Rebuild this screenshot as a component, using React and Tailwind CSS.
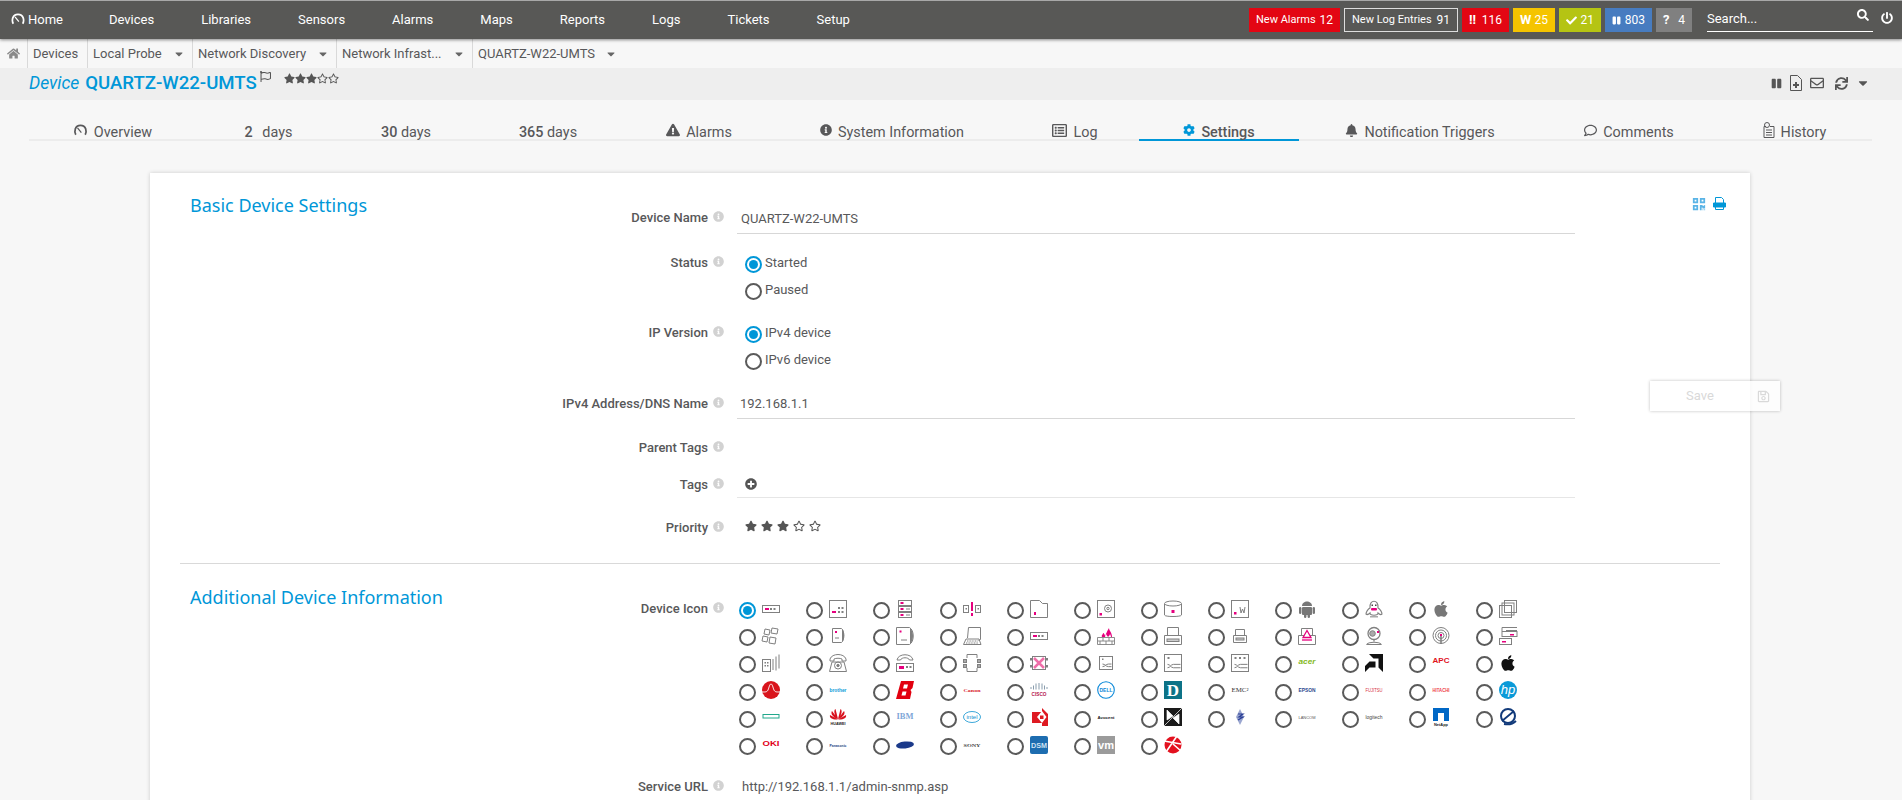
import React from 'react';
import {
  FaHome, FaSearch, FaPowerOff, FaExclamationTriangle, FaInfoCircle, FaCog, FaBell, FaRegComment,
  FaStar, FaRegStar, FaPlusCircle, FaPause, FaRegEnvelope, FaSync, FaCaretDown, FaQrcode,
  FaRegSave, FaCheck, FaRegListAlt, FaRegFlag,
} from 'react-icons/fa';

const NAV = ['Devices', 'Libraries', 'Sensors', 'Alarms', 'Maps', 'Reports', 'Logs', 'Tickets', 'Setup'];
const G = '#808080';
const P = '#e6007e';

const Gauge = ({ className }) => (
  <svg viewBox="0 0 16 14" className={className} fill="none" stroke="currentColor">
    <path d="M2.5 12.5C0.5 9 1.2 1.5 8 1.5s7.5 7.5 5.5 11" strokeWidth="2" />
    <path d="M4.5 4.5L9 10" strokeWidth="1.4" />
  </svg>
);

// Small svg wrapper for the device icon sprite, every cell is 18x18
const I = ({ children }) => (
  <svg viewBox="0 0 18 18" width="18" height="18" fill="none" stroke={G} strokeWidth="1" className="mb-[4px] shrink-0 overflow-visible">
    {children}
  </svg>
);
const Pk = ({ x, y, w = 2, h = 2 }) => <rect x={x} y={y} width={w} height={h} fill={P} stroke="none" />;
const Dot = ({ x, y, w = 1.5, h = 1.5, c = G }) => <rect x={x} y={y} width={w} height={h} fill={c} stroke="none" />;
const Lbl = ({ t, c, s = 5, w = 400, f = 'Liberation Sans', y = 10.5, l = 17, it }) => (
  <text x="9" y={y} textAnchor="middle" textLength={l} lengthAdjust="spacingAndGlyphs" fontSize={s} fontWeight={w} fontStyle={it ? 'italic' : 'normal'} fontFamily={f} fill={c} stroke="none">{t}</text>
);
const Logo = props => <I><Lbl {...props} /></I>;
const XBox = ({ children, x = 0.5, y = 0.5, s = 17 }) => (
  <I>
    <rect x={x} y={y} width={s} height={s} />
    <path d={`M${x + 3} ${y + s * 0.58}c3 0 3 ${s * 0.2} 6 ${s * 0.2}h${s - 10}M${x + 3} ${y + s * 0.78}c3 0 3 -${s * 0.2} 6 -${s * 0.2}h${s - 10}`} />
    {children}
  </I>
);
const Apple = ({ c }) => (
  <svg viewBox="0 0 384 512" width="18" height="18" className="mb-[4px] shrink-0" fill={c}>
    <path d="M318.7 268.7c-.2-36.7 16.4-64.4 50-84.8-18.8-26.9-47.2-41.7-84.7-44.6-35.5-2.8-74.3 20.7-88.5 20.7-15 0-49.4-19.7-76.4-19.7C63.3 141.2 4 184.8 4 273.5q0 39.3 14.4 81.2c12.8 36.7 59 126.7 107.2 125.2 25.2-.6 43-17.9 75.8-17.9 31.8 0 48.3 17.9 76.4 17.9 48.6-.7 90.4-82.5 102.6-119.3-65.2-30.7-61.7-90-61.7-91.9zm-56.6-164.2c27.3-32.4 24.8-61.9 24-72.5-24.1 1.4-52 16.4-67.9 34.9-17.5 19.8-27.8 44.3-25.6 71.9 26.1 2 49.9-11.4 69.5-34.3z" />
  </svg>
);

const ICONS = [
  <I><rect x=".5" y="5.5" width="17" height="7" /><Pk x="3" y="8" w="4" /><Dot x="8" y="8" w="2" h="2" /><Dot x="11.5" y="8" w="2" h="2" /></I>,
  <I><rect x=".5" y=".5" width="17" height="17" /><Pk x="3" y="11" w="4" /><Dot x="9" y="7" w="2" h="2" /><Dot x="12.5" y="7" w="2" h="2" /><Dot x="9" y="11" w="2" h="2" /><Dot x="12.5" y="11" w="2" h="2" /></I>,
  <I><rect x="2.5" y=".5" width="13" height="5" /><rect x="2.5" y="6.5" width="13" height="5" /><rect x="2.5" y="12.5" width="13" height="5" /><Pk x="4.5" y="2" w="3" /><Pk x="4.5" y="8" w="3" /><Pk x="4.5" y="14" w="3" /><path d="M10 9h4M10 15h4" /></I>,
  <I><rect x=".5" y="5.5" width="5" height="7" /><rect x="12.5" y="5.5" width="5" height="7" /><Pk x="8" y="2" h="9" /><Pk x="8" y="13" h="3" /><Dot x="2.5" y="8" /><Dot x="14.5" y="8" /></I>,
  <I><path d="M.5 .5h9l3 3h5v14h-17z" /><Pk x="4" y="12" h="3" /></I>,
  <I><rect x=".5" y=".5" width="17" height="17" /><Pk x="2.5" y="13" w="2.5" h="2.5" /><circle cx="11" cy="8.5" r="3.5" /><circle cx="11" cy="8.5" r="1.2" /></I>,
  <I><path d="M.5 4v11c0 2 17 2 17 0V4" /><ellipse cx="9" cy="3.5" rx="8.5" ry="2.5" /><Pk x="7.5" y="10" w="3" h="3" /></I>,
  <I><rect x=".5" y=".5" width="17" height="17" /><Pk x="3" y="12" w="2.5" h="2.5" /><path d="M9 7l1 6 1.5-4 1.5 4 1-6" /></I>,
  <I><g fill="#777" stroke="none"><path d="M4 6c0-6 10-6 10 0z" /><rect x="4" y="7" width="10" height="8" rx="1" /><rect x="1" y="7" width="2.4" height="7" rx="1.2" /><rect x="14.6" y="7" width="2.4" height="7" rx="1.2" /><rect x="6" y="14" width="2.4" height="4" rx="1.2" /><rect x="9.6" y="14" width="2.4" height="4" rx="1.2" /></g></I>,
  <I><path d="M5 8C4-1 14-1 13 8c2 1 4 4 4 6-1 1-3 0-4-1 0 3-8 3-8 0-1 1-3 2-4 1 0-2 2-5 4-6z" strokeWidth="1.1" /><rect x="6" y="8" width="6" height="2.5" rx="1" fill={P} stroke="none" /><Dot x="6.5" y="4.5" c="#444" /><Dot x="10" y="4.5" c="#444" /><rect x="5" y="16" width="8" height="1.5" fill="#aaa" stroke="none" /></I>,
  <Apple c="#777" />,
  <I><rect x=".5" y="5.5" width="12" height="12" /><rect x="3" y="3" width="12" height="12" /><rect x="5.5" y=".5" width="12" height="12" /></I>,

  <I><path d="M3 2l5 1-1 5-5-1zM10 1l6 1-1 5-6-1zM1 9l5 1-1 5-5-1zM8 10l6 1-1 6-6-1z" /></I>,
  <I><path d="M3.5 1.5h9c3 2 3 12 0 14h-9z" /><path d="M13 2c3 2 3 11 0 13" fill={G} stroke="none" /><Pk x="6" y="4" /><path d="M6 11h4" /></I>,
  <I><path d="M.5 .5h13c5 3 5 14 0 17H.5z" /><path d="M14 1c4 3 4 13 0 16z" fill={G} stroke="none" /><Pk x="3.5" y="3.5" /><path d="M5 13h6" /></I>,
  <I><path d="M5.5 .5h12v12l-2 1" /><path d="M4.5 11l1-10.5" /><path d="M3 12h13l2 5.5H.5z" /><path d="M4 14h11M3 16h12" strokeDasharray="1 .6" /></I>,
  <I><rect x=".5" y="5.5" width="17" height="7" /><Pk x="3" y="8" w="4" /><Dot x="8" y="8" w="2" h="2" /><Dot x="11.5" y="8" w="2" h="2" /></I>,
  <I><path d="M.5 10.5h17v7H.5zM.5 14h17M6 10.5V14M12 10.5V14M3 14v3.5M9 14v3.5M15 14v3.5" strokeWidth=".9" /><path d="M5 10c-1-2 1-2 1-4 1 0 2 2 2 3 1-2 2-5 4-8 0 3 3 4 3 9h-1c0-1-1-3-1-3 0 1-1 2-2 3-1-1-2-3-2-3l-1 3z" fill={P} stroke="none" /></I>,
  <I><path d="M3.5 8V.5h11V8" /><path d="M.5 8.5h17v9H.5z" /><rect x="3" y="12" width="12" height="2.5" fill="#ccc" /></I>,
  <I><path d="M4.5 8V2.5h9V8" /><path d="M2.5 8.5h13v7h-13z" /><rect x="5" y="11" width="8" height="2" fill="#ccc" /></I>,
  <I><path d="M3.5 8V1.5h11V8" /><path d="M.5 8.5h17v9H.5z" /><path d="M9 3.5l4 7H5z" fill="#fff" stroke={P} strokeWidth="1.3" /><path d="M4 13h10" stroke={P} strokeWidth="1.3" /></I>,
  <I><circle cx="9" cy="6.5" r="6" strokeWidth="1.3" /><circle cx="7.5" cy="6.5" r="2.8" fill="#aaa" /><Pk x="12" y="4" /><path d="M9 12.5v2M2 17.5c1-3 13-3 14 0z" strokeWidth="1.2" /></I>,
  <I><circle cx="9" cy="8.5" r="8" /><circle cx="9" cy="8.5" r="5.5" /><circle cx="9" cy="8.5" r="3" /><path d="M9 8v9" strokeWidth="1.6" /><Pk x="8" y="7" /></I>,
  <I><path d="M3 4V.5h15M7 3.5h11" /><rect x="3" y="4.5" width="15" height="5" /><rect x=".5" y="11.5" width="12" height="6" fill="#fff" /><Pk x="3" y="14" w="4" h="1.5" /><Pk x="11" y="7" w="4" h="1.5" /></I>,

  <I><rect x=".5" y="5.5" width="8" height="12" /><Dot x="2.5" y="8" /><Dot x="5" y="8" /><Dot x="2.5" y="11" /><Dot x="5" y="11" /><path d="M11 5v11M14 2.5v14M17 .5v14" /></I>,
  <I><path d="M1 5c2-6 14-6 16 0v2h-4V5c-2-1-6-1-8 0v2H1zM3 8h12l2.500 9.500H.5z" /><circle cx="9" cy="11.5" r="3.5" /><circle cx="9" cy="11.5" r="1.2" fill={G} /></I>,
  <I><path d="M1 6c1-7 15-7 16 0H13.5c-1-3-8-3-9 0z" /><rect x=".5" y="9.5" width="17" height="8" /><Pk x="3" y="12" w="5" h="3" /><Dot x="10" y="12" w="2" h="2" /><Dot x="13.5" y="12" w="2" h="2" /></I>,
  <I><path d="M4 .5h10M14 .5V4M4 .5V4M14 17.5H4V14M14 17.5V14" /><rect x=".5" y="5.5" width="3" height="3" fill="#aaa" /><rect x="14.5" y="5.5" width="3" height="3" fill="#aaa" /><rect x=".5" y="10.5" width="3" height="3" fill="#aaa" /><rect x="14.5" y="10.5" width="3" height="3" fill="#aaa" /></I>,
  <I><rect x="2.5" y="2.5" width="13" height="13" /><path d="M4 4l10 10M14 4L4 14" stroke="#ef6fa9" strokeWidth="2.5" /><Dot x="0" y="4" w="2.5" h="2.5" /><Dot x="15.5" y="4" w="2.5" h="2.5" /><Dot x="0" y="11" w="2.5" h="2.5" /><Dot x="15.5" y="11" w="2.5" h="2.5" /></I>,
  <XBox x={2.5} y={2.5} s={13}><Dot x="5" y="4.5" /></XBox>,
  <XBox><Dot x="3.5" y="3" w="2" h="2" /></XBox>,
  <XBox><Dot x="3.5" y="3" w="2" h="2" /><Dot x="8" y="3" w="2" h="2" /><Dot x="12.5" y="3" w="2" h="2" /></XBox>,
  <Logo t="acer" c="#83b81a" s={7} w={700} y={10} it />,
  <I><path d="M4 0h14v18l-4.5-4.5V4.500H8.500zM0 18v-6l4.5-4.5h6v6h-6z" fill="#111" stroke="none" /></I>,
  <Logo t="APC" c="#e1121b" s={7} w={700} y={9} />,
  <Apple c="#111" />,

  <I><circle cx="9" cy="9" r="9" fill="#d9141c" stroke="none" /><path d="M0 11c4 0 5 0 6-2s1.5-6 3-6 2 4 3 6 2 2 6 2" stroke="#fff" strokeWidth="1" /></I>,
  <Logo t="brother" c="#0d9ad7" s={5} w={700} y={10.5} />,
  <I><path d="M5 0h13l-1.5 7-2 2 1 2L14 18H0zM8 3.5L7 7.5h4L12 3.5zM6.5 10.5L5.5 14.5h4l1-4z" fill="#e2000f" fillRule="evenodd" stroke="none" /></I>,
  <Logo t="Canon" c="#d8222a" s={5} w={700} f="Liberation Serif" y={10.5} />,
  <I><path d="M1 6v2M3.5 4.5v4M6 2.5v6M9 2v6.5M12 2.5v6M14.5 4.5v4M17 6v2" stroke="#58728a" strokeWidth=".7" /><Lbl t="CISCO" c="#b4164e" s={4.5} w={700} y={14.5} l={15} /></I>,
  <I><circle cx="9" cy="9" r="8.3" stroke="#0a88d8" strokeWidth="1.1" /><Lbl t="DELL" c="#0a88d8" s={5.5} w={700} y={11} l={13} /></I>,
  <I><rect width="18" height="18" fill="#0d7387" stroke="none" /><text x="9" y="15" textAnchor="middle" fontSize="17" fontWeight="700" fontFamily="Liberation Serif" fill="#fff" stroke="none">D</text></I>,
  <Logo t="EMC²" c="#333" s={6} f="Liberation Serif" y={11} />,
  <Logo t="EPSON" c="#2c4a8e" s={5} w={700} y={10.5} />,
  <Logo t="FUJITSU" c="#d7323f" s={5} y={11} />,
  <Logo t="HITACHI" c="#ee3b4b" s={4.5} w={700} y={10.5} />,
  <I><circle cx="9" cy="9" r="9" fill="#0a9ad8" stroke="none" /><text x="9" y="13" textAnchor="middle" fontSize="13" fontStyle="italic" fontFamily="Liberation Sans" fill="#fff" stroke="none">hp</text></I>,

  <I><rect x="1" y="6.5" width="16" height="3.5" stroke="#21a88c" strokeWidth="1" /></I>,
  <I><path d="M9 11L6.5 1C4.5 2 5 7 9 11zM9 11l2.5-10c2 1 1.5 6-2.5 10zM9 11L3 3C1.5 5 3 9 9 11zM9 11l6-8c1.5 2 0 6-6 8zM9 11.5L1 7c-1 3 3 5 8 4.5zM9 11.5L17 7c1 3-3 5-8 4.5z" fill="#d8101d" stroke="none" /><Lbl t="HUAWEI" c="#222" s={3.5} w={700} y={16.5} l={15} /></I>,
  <Logo t="IBM" c="#7ea7d8" s={7.5} w={700} f="Liberation Serif" y={11} />,
  <I><ellipse cx="9" cy="9" rx="8.5" ry="5.5" stroke="#0d92cf" strokeWidth=".8" /><Lbl t="intel" c="#0d92cf" s={6} y={11} l={11} /></I>,
  <I><path d="M12 0l6 6v12h-6v-3H2V4h10z" fill="#de1a22" stroke="none" /><path d="M12 3l4.5 6L12 15 7 9z" fill="#fff" stroke="none" /><rect x="10" y="7.5" width="3.5" height="3.5" fill="#de1a22" stroke="none" /></I>,
  <Logo t="Avocent" c="#222" s={4} w={700} y={10.5} />,
  <I><rect width="18" height="18" fill="#1a1a1a" stroke="none" /><path d="M0 18L18 0M3 2l6 6-6 4zM15 16l-6-6 6-4z" fill="#fff" stroke="#fff" strokeWidth=".7" /></I>,
  <I><path d="M9 1l4 8-4 8-4-8z" fill="#9aa6d0" stroke="none" /><path d="M7 6h5l-4 3h4l-5 3" stroke="#2a3f96" strokeWidth="1.2" /></I>,
  <Logo t="LANCOM" c="#555" s={4} y={10.5} />,
  <Logo t="logitech" c="#444" s={5} y={10.5} />,
  <I><path d="M1 0h16v13h-5V5H6v8H1z" fill="#0067c5" stroke="none" /><Lbl t="NetApp" c="#222" s={4} w={700} y={17.5} l={14} /></I>,
  <I><circle cx="9" cy="8" r="7" stroke="#123a7a" strokeWidth="2" /><path d="M3 13L15 3M5 16c5 1 9 0 12-3" stroke="#123a7a" strokeWidth="1.8" /></I>,

  <Logo t="OKI" c="#e2001a" s={6.5} w={700} y={10} />,
  <Logo t="Panasonic" c="#27407f" s={4} w={700} y={10.5} />,
  <I><ellipse cx="9" cy="9" rx="9" ry="3.5" fill="#1b3a8a" stroke="none" transform="rotate(-6 9 9)" /></I>,
  <Logo t="SONY" c="#444" s={4.5} w={700} f="Liberation Serif" y={10.5} />,
  <I><rect width="18" height="18" rx="2" fill="#1d6db0" stroke="none" /><Lbl t="DSM" c="#cfe2f3" s={7} w={700} y={11.5} l={16} /></I>,
  <I><rect width="18" height="18" fill="#9b9b9b" stroke="none" /><Lbl t="vm" c="#fff" s={11} w={700} y={13} l={16} /></I>,
  <I><circle cx="9" cy="9" r="8.5" fill="#e3111f" stroke="none" /><path d="M0 5l17 3M2 16L13 0M9 8l8 7" stroke="#fff" strokeWidth="1.6" /></I>,
];

const Radio = ({ on }) => (
  <span className={`flex h-[17px] w-[17px] shrink-0 items-center justify-center rounded-full border-2 bg-white ${on ? 'border-[#0097d8]' : 'border-[#5a5a5a]'}`}>
    {on && <span className="h-[9px] w-[9px] rounded-full bg-[#0097d8]" />}
  </span>
);

const Option = ({ on, label }) => (
  <div className="flex h-5 items-center gap-[3px]">
    <Radio on={on} />
    <span className="mb-[3px]">{label}</span>
  </div>
);

const Field = ({ label, className = '', valueClass = '', children }) => (
  <div className={`flex items-start ${className}`}>
    <div className="flex h-5 w-[218px] items-center justify-end text-[13px] font-medium">{label}</div>
    <div className="flex h-5 w-[29px] shrink-0 items-center pb-[3px] pl-[5px]">
      <FaInfoCircle className="text-[11px] text-[#d2d2d2]" />
    </div>
    <div className={`w-[838px] ${valueClass}`}>{children}</div>
  </div>
);

const Tab = ({ width, children, active }) => (
  <div className={`${width} flex h-[29px] items-center justify-center border-b-2 pt-[15px] ${active ? 'border-[#0097d8]' : 'border-[#ececec]'}`}>
    <div className="flex items-center gap-[6px] leading-[14px]">{children}</div>
  </div>
);

const Badge = ({ bg, children, count, w }) => (
  <div className={`flex h-6 ${w} items-center justify-between whitespace-nowrap px-[7px] text-[11px] text-white ${bg}`}>
    {children}
    <span className="text-[12px]">{count}</span>
  </div>
);

const Crumb = ({ width, children, caret }) => (
  <div className={`${width} flex h-full items-center border-l border-[#d9d9d9] pl-[5px] pr-[7px]`}>
    <span className="flex-1">{children}</span>
    {caret && <FaCaretDown className="text-[12px] text-[#666]" />}
  </div>
);

export default function App() {
  return (
    <div className="relative h-[800px] w-[1902px] overflow-hidden bg-[#f7f7f7] text-[13px] text-[#58585a] [font-family:Roboto,sans-serif]">
      {/* top nav */}
      <div className="relative z-10 flex h-[39px] items-center border-t border-[#a8a8a8] bg-[#585856] pl-[11px] pr-[9px] text-white shadow-[0_1px_3px_rgba(0,0,0,0.45)]">
        <Gauge className="mb-[2px] h-3 w-[14px]" />
        <span className="ml-[3px] mr-[46px]">Home</span>
        <div className="flex gap-[47px]">
          {NAV.map(n => <span key={n}>{n}</span>)}
        </div>
        <div className="ml-auto flex gap-1">
          <Badge bg="bg-[#e30613]" count="12" w="w-[91px]">New Alarms</Badge>
          <Badge bg="border border-[#ddd]" count="91" w="w-[114px]">New Log Entries</Badge>
          <Badge bg="bg-[#e30613]" count="116" w="w-[47px]"><span className="text-[13px] font-bold">!!</span></Badge>
          <Badge bg="bg-[#f5c400]" count="25" w="w-[42px]"><span className="text-[13px] font-bold">W</span></Badge>
          <Badge bg="bg-[#b5c413]" count="21" w="w-[42px]"><FaCheck className="text-[11px]" /></Badge>
          <Badge bg="bg-[#477cc0]" count="803" w="w-[47px]"><FaPause className="text-[9px]" /></Badge>
          <Badge bg="bg-[#808080]" count="4" w="w-9"><span className="text-[13px] font-bold">?</span></Badge>
        </div>
        <div className="ml-[15px] flex h-6 w-[166px] items-center justify-between border-b border-white pb-[1px] pr-[4px] text-[13px]">
          Search...
          <FaSearch className="mb-2 text-[12px]" />
        </div>
        <FaPowerOff className="mb-[5px] ml-[8px] text-[12px]" />
      </div>

      {/* breadcrumb */}
      <div className="flex h-[29px] items-center">
        <div className="flex w-[27px] justify-center"><FaHome className="text-[13px] text-[#8a8a8a]" /></div>
        <Crumb width="w-[60px]">Devices</Crumb>
        <Crumb width="w-[105px]" caret>Local Probe</Crumb>
        <Crumb width="w-[144px]" caret>Network Discovery</Crumb>
        <Crumb width="w-[136px]" caret>Network Infrast...</Crumb>
        <div className="flex h-full items-center border-l border-[#d9d9d9] pl-[5px]">
          QUARTZ-W22-UMTS
          <FaCaretDown className="ml-[10px] text-[12px] text-[#666]" />
        </div>
      </div>

      {/* title */}
      <div className="flex h-8 items-start justify-between bg-[#eeeeee] pl-[29px] pr-[32px]">
        <div className="flex items-start">
          <span className="text-[17.5px] italic leading-[30px] text-[#0097d8]">Device</span>
          <span className="ml-[6px] text-[18.6px] font-medium leading-[30px] text-[#0097d8]">QUARTZ-W22-UMTS</span>
          <FaRegFlag className="ml-[3px] mt-[3px] text-[11px] text-[#555]" />
          <div className="ml-[13px] mt-[5px] flex text-[#555]">
            <FaStar className="text-[11px]" /><FaStar className="text-[11px]" /><FaStar className="text-[11px]" /><FaRegStar className="text-[11px]" /><FaRegStar className="text-[11px]" />
          </div>
        </div>
        <div className="mt-[7px] flex items-center gap-[8px] text-[#555]">
          <FaPause className="text-[11px]" />
          <svg viewBox="0 0 12 16" className="h-4 w-3" fill="none" stroke="currentColor">
            <path d="M.5 15.5V.5h7l4 4v11z" />
            <path d="M3 10h6M6 7v6" strokeWidth="2" />
          </svg>
          <FaRegEnvelope className="text-[14px]" />
          <FaSync className="ml-[3px] text-[13px]" />
          <FaCaretDown className="text-[14px]" />
        </div>
      </div>

      {/* tabs */}
      <div className="ml-[29px] mt-[12px] flex w-[1843px] text-[14.4px]">
        <Tab width="w-[167px]"><Gauge className="mb-[6px] h-3 w-[15px]" />Overview</Tab>
        <Tab width="w-[145px]"><span><b className="mr-[6px] font-medium">2</b> days</span></Tab>
        <Tab width="w-[130px]"><span><b className="font-medium">30</b> days</span></Tab>
        <Tab width="w-[154px]"><span><b className="font-medium">365</b> days</span></Tab>
        <Tab width="w-[148px]"><FaExclamationTriangle className="mb-[6px] text-[14px]" />Alarms</Tab>
        <Tab width="w-[238px]"><FaInfoCircle className="mb-[6px] text-[12px]" />System Information</Tab>
        <Tab width="w-[128px]"><FaRegListAlt className="mb-[6px] text-[15px]" />Log</Tab>
        <Tab width="w-[160px]" active><FaCog className="mb-[6px] text-[12px] text-[#0097d8]" /><span className="font-medium">Settings</span></Tab>
        <Tab width="w-[242px]"><FaBell className="mb-[6px] text-[13px]" />Notification Triggers</Tab>
        <Tab width="w-[176px]"><FaRegComment className="mb-[6px] text-[13px]" />Comments</Tab>
        <Tab width="w-[155px]">
          <svg viewBox="0 0 12 16" className="mb-[6px] h-4 w-3" fill="none" stroke="currentColor">
            <path d="M3 4.5H1v11h10v-11H7" />
            <circle cx="4" cy="3" r="2.5" />
            <path d="M3 8h6M3 10.5h6M3 13h6" />
          </svg>
          History
        </Tab>
      </div>

      {/* card */}
      <div className="ml-[150px] mt-[32px] h-[700px] w-[1600px] bg-white shadow-[0_0_4px_rgba(0,0,0,0.18)]">
        <div className="flex pl-10">
          <div className="w-[300px] pt-5">
            <h2 className="text-[18px] leading-6 text-[#0097d8] [font-family:'Noto_Sans',sans-serif]">Basic Device Settings</h2>
          </div>
          <div className="w-[1085px] pt-[27px]">
            <Field label="Device Name" className="pt-[8px]" valueClass="-mt-[8px] h-[34px] border-b border-[#d7d7d7] pl-[4px] pt-[9px] leading-5">
              QUARTZ-W22-UMTS
            </Field>
            <Field label="Status" className="mt-[19px]" valueClass="flex flex-col gap-[7px] pl-2 pt-[1px]">
              <Option on label="Started" />
              <Option label="Paused" />
            </Field>
            <Field label="IP Version" className="mt-[22px]" valueClass="flex flex-col gap-[7px] pl-2 pt-[1px]">
              <Option on label="IPv4 device" />
              <Option label="IPv6 device" />
            </Field>
            <Field label="IPv4 Address/DNS Name" className="mt-[23px]" valueClass="h-[25px] border-b border-[#d7d7d7] pl-[3px] leading-5">
              192.168.1.1
            </Field>
            <Field label="Parent Tags" className="mt-[19px]" />
            <Field label="Tags" className="mt-[17px]" valueClass="h-[23px] border-b border-[#e6e6e6] pl-2 pt-[3px]">
              <FaPlusCircle className="text-[12px] text-[#555]" />
            </Field>
            <Field label="Priority" className="mt-[20px]" valueClass="flex gap-[4px] pl-2 pt-[2px] text-[12px] text-[#555]">
              <FaStar /><FaStar /><FaStar /><FaRegStar /><FaRegStar />
            </Field>
          </div>
          <div className="ml-[117px] flex h-fit gap-[7px] pt-6 text-[#0097d8]">
            <FaQrcode className="text-[14px] text-[#5ab4e6]" />
            <svg viewBox="0 0 13 13" className="h-[13px] w-[13px]" fill="none" stroke="currentColor">
              <path d="M2.5 6V.5h6l2 2V6M2.5 10v2.5h8V10" />
              <path d="M.5 6h12v4H.5z" fill="currentColor" />
            </svg>
          </div>
        </div>

        <div className="mx-[30px] mt-[25px] h-px bg-[#d9d9d9]" />

        <div className="flex pl-10">
          <div className="w-[300px] pt-[21px]">
            <h2 className="text-[18px] leading-6 text-[#0097d8] [font-family:'Noto_Sans',sans-serif]">Additional Device Information</h2>
          </div>
          <div className="w-[1085px] pt-[35px]">
            <Field label="Device Icon" valueClass="-mt-[2px] grid w-[806px] grid-cols-[repeat(12,67px)] auto-rows-[27.2px] pl-[2px]">
              {ICONS.map((icon, i) => (
                <div key={i} className="flex items-center gap-[6px]">
                  <Radio on={i === 0} />
                  {icon}
                </div>
              ))}
            </Field>
            <Field label="Service URL" className="mt-[17px]" valueClass="pl-[5px] leading-5">
              http://192.168.1.1/admin-snmp.asp
            </Field>
          </div>
        </div>
      </div>

      {/* floating save */}
      <div className="absolute left-[1650px] top-[381px] flex h-[30px] w-[130px] items-center bg-white/80 pl-9 text-[13px] text-[#d9d9d9] shadow-[0_0_3px_rgba(0,0,0,0.25)]">
        <span className="flex-1">Save</span>
        <FaRegSave className="mr-[10px] text-[13px]" />
      </div>
    </div>
  );
}
